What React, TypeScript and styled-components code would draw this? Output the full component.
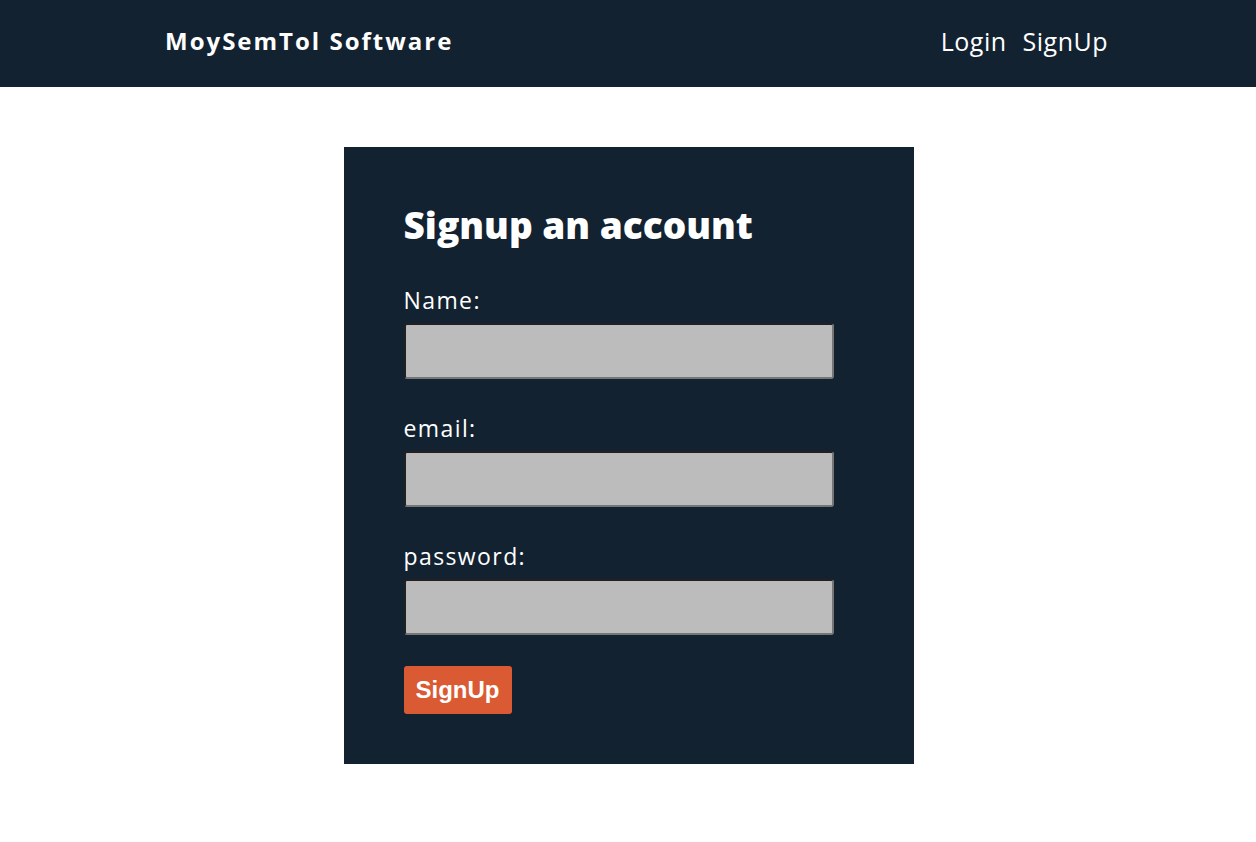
import React from 'react';
import styled, { createGlobalStyle } from 'styled-components';

const GlobalStyle = createGlobalStyle`
  body {
    margin: 0;
    background: #ffffff;
    font-family: "Open Sans", "DejaVu Sans", sans-serif;
  }
`;

const Header = styled.header`
  height: 87px;
  box-sizing: border-box;
  background: #132231;
  display: flex;
  align-items: center;
  justify-content: space-between;
  padding: 0 148px 6px 165px;
`;

const Logo = styled.div`
  color: #fff;
  font-weight: 700;
  font-size: 24px;
  letter-spacing: 2px;
`;

const Nav = styled.nav`
  display: flex;
  gap: 16px;
`;

const NavLink = styled.a`
  color: #fff;
  font-size: 25px;
  letter-spacing: 0.5px;
  text-decoration: none;
`;

const Main = styled.main`
  display: flex;
  justify-content: center;
  padding: 60px 0 0 1px;
`;

const Card = styled.form`
  width: 570px;
  box-sizing: border-box;
  background: #132231;
  padding: 52px 60px 50px;
  display: flex;
  flex-direction: column;
`;

const Title = styled.h1`
  margin: 0 0 35px;
  color: #fff;
  font-size: 37px;
  font-weight: 800;
  letter-spacing: 0;
`;

const Field = styled.div`
  display: flex;
  flex-direction: column;
  margin-bottom: 34px;
`;

const Label = styled.label`
  color: #fff;
  font-size: 23px;
  letter-spacing: 1.4px;
  line-height: 30px;
  margin-bottom: 8px;
`;

const Input = styled.input`
  width: 430px;
  height: 56px;
  box-sizing: border-box;
  background: #bcbcbc;
  border: 2px inset #767676;
  border-radius: 3px;
`;

const Button = styled.button`
  align-self: flex-start;
  margin-top: -3px;
  width: 108px;
  height: 48px;
  background: #d95a33;
  color: #fff;
  border: none;
  border-radius: 3px;
  font-family: "Liberation Sans", Arial, sans-serif;
  font-weight: 700;
  font-size: 24px;
`;

export default function App() {
  return (
    <>
      <GlobalStyle />
      <Header>
        <Logo>MoySemTol Software</Logo>
        <Nav>
          <NavLink href="#">Login</NavLink>
          <NavLink href="#">SignUp</NavLink>
        </Nav>
      </Header>
      <Main>
        <Card onSubmit={(e) => e.preventDefault()}>
          <Title>Signup an account</Title>
          <Field>
            <Label>Name:</Label>
            <Input type="text" />
          </Field>
          <Field>
            <Label>email:</Label>
            <Input type="email" />
          </Field>
          <Field>
            <Label>password:</Label>
            <Input type="password" />
          </Field>
          <Button type="submit">SignUp</Button>
        </Card>
      </Main>
    </>
  );
}
